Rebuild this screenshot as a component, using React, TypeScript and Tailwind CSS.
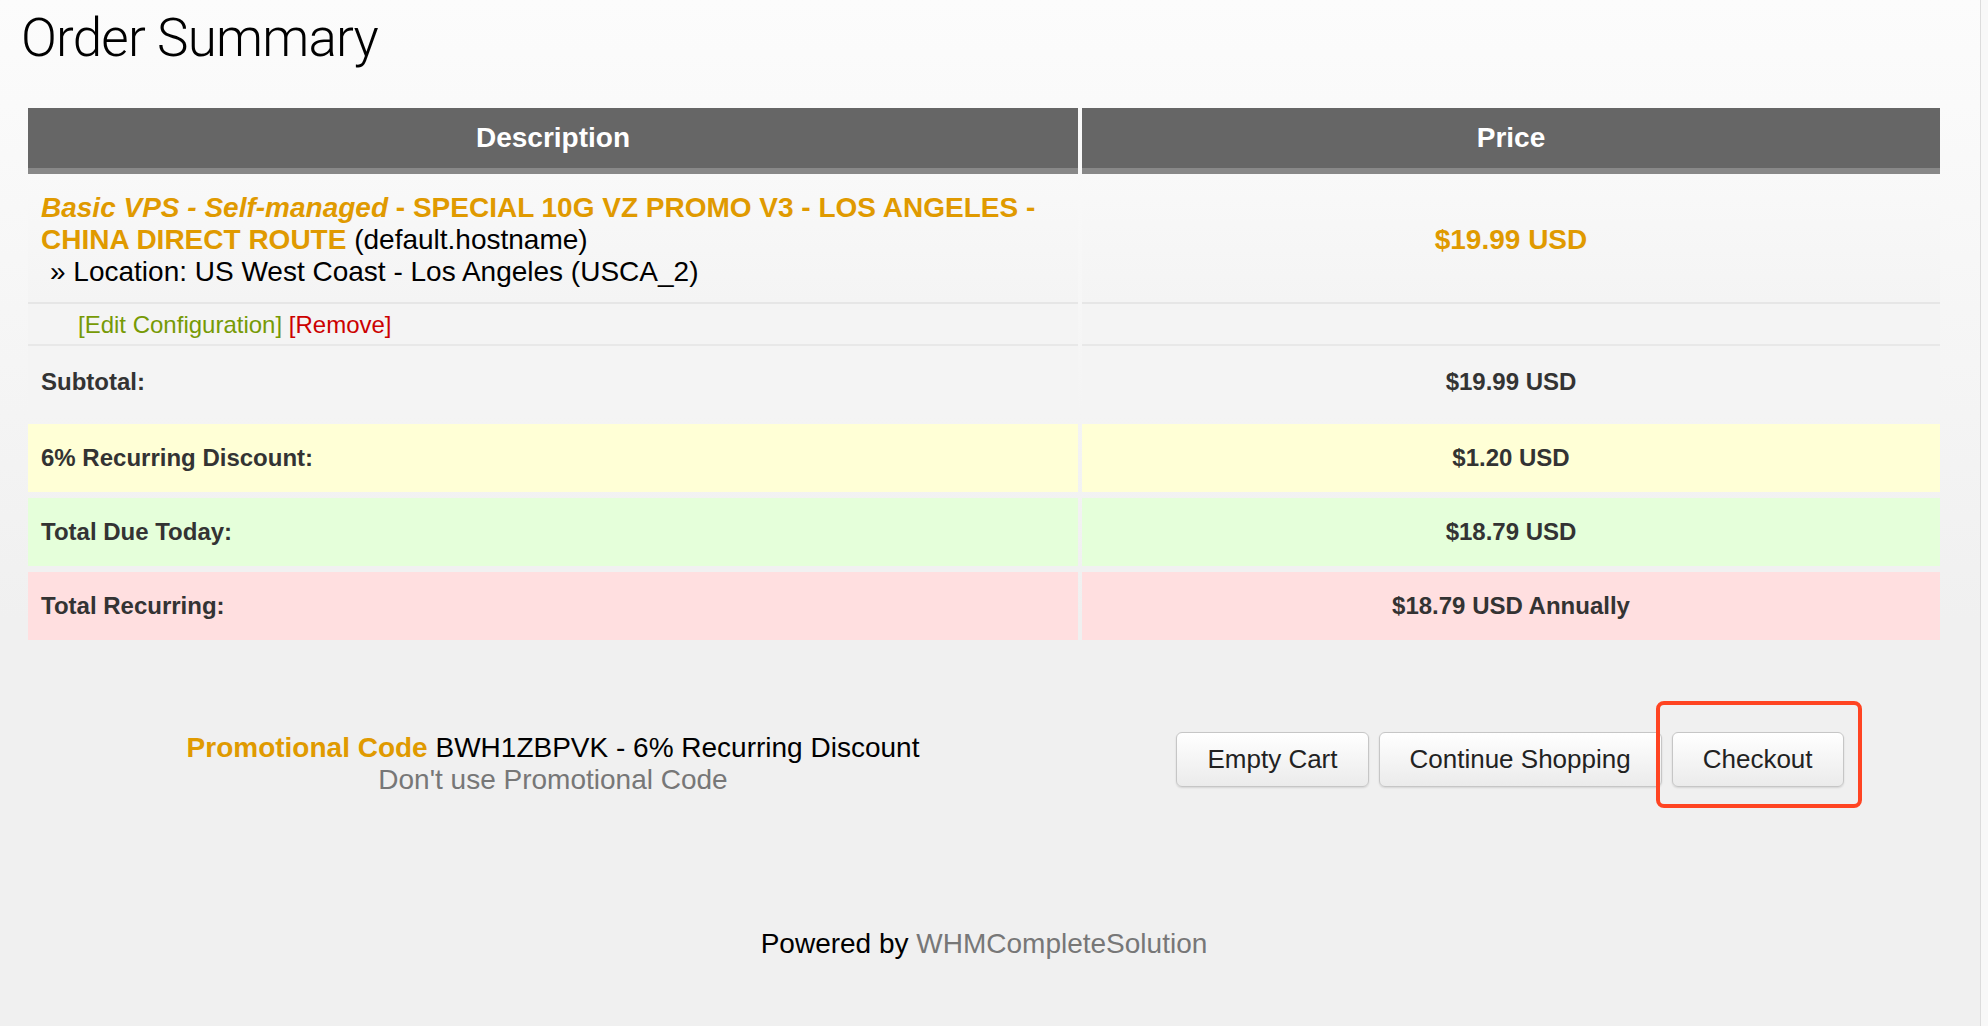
const orange = "text-[#e09a00]";

const SummaryRow = ({ label, value, bg, h = "h-[68px]" }: { label: string; value: string; bg: string; h?: string }) => (
  <div className={`grid grid-cols-[1050px_858px] gap-x-[4px] ${h}`}>
    <div className={`${bg} flex items-center pl-[13px] text-[24px] font-bold text-[#333]`}>{label}</div>
    <div className={`${bg} flex items-center justify-center text-[24px] font-bold text-[#333]`}>{value}</div>
  </div>
);

const Button = ({ children }: { children: React.ReactNode }) => (
  <button className="h-[55px] px-[30px] rounded-[6px] border border-[#c6c6c6] bg-gradient-to-b from-white to-[#ebebeb] text-[26px] text-[#222] shadow-[0_1px_2px_rgba(0,0,0,0.12)]">
    {children}
  </button>
);

export default function App() {
  return (
    <div className="min-h-screen flex bg-[linear-gradient(#fcfcfc,#f0f0f0_620px)] font-['Liberation_Sans',Arial,sans-serif]">
      <div className="w-[1980px] pb-[60px]">
        <h1 className="pl-[21px] pt-[8px] h-[68px] leading-[60px] text-[53px] font-light tracking-[-0.8px] text-black font-['Roboto',sans-serif]">
          Order Summary
        </h1>

        <div className="ml-[28px] mt-[40px] w-[1912px]">
          {/* header */}
          <div className="grid grid-cols-[1050px_858px] gap-x-[4px]">
            <div className="h-[66px] bg-[#666] border-b-[6px] border-[#888] flex items-center justify-center text-white text-[28px] font-bold">
              Description
            </div>
            <div className="h-[66px] bg-[#666] border-b-[6px] border-[#888] flex items-center justify-center text-white text-[28px] font-bold">
              Price
            </div>
          </div>

          {/* product */}
          <div className="grid grid-cols-[1050px_858px] gap-x-[4px]">
            <div className="h-[130px] bg-gradient-to-b from-[#f9f9f9] to-[#f4f4f4] border-b-2 border-[#e6e6e6] pl-[13px] pt-[18px] text-[28px] leading-[32px] text-black">
              <p>
                <span className={`${orange} font-bold italic`}>Basic VPS - Self-managed</span>
                <span className={`${orange} font-bold`}> - SPECIAL 10G VZ PROMO V3 - LOS ANGELES - CHINA DIRECT ROUTE</span>{" "}
                (default.hostname)
              </p>
              <p className="pl-[9px]">» Location: US West Coast - Los Angeles (USCA_2)</p>
            </div>
            <div className={`h-[130px] pt-[4px] bg-gradient-to-b from-[#f9f9f9] to-[#f4f4f4] border-b-2 border-[#e6e6e6] flex items-center justify-center text-[28px] font-bold ${orange}`}>
              $19.99 USD
            </div>
          </div>

          <div className="grid grid-cols-[1050px_858px] gap-x-[4px]">
            <div className="h-[42px] bg-[#f4f4f4] border-b-2 border-[#e8e8e8] pl-[50px] pt-[1px] text-[24px] leading-[40px]">
              <span className="text-[#779a05]">[Edit Configuration]</span> <span className="text-[#cc0000]">[Remove]</span>
            </div>
            <div className="h-[42px] bg-[#f4f4f4] border-b-2 border-[#e8e8e8]" />
          </div>

          <div className="flex flex-col gap-[6px]">
            <SummaryRow label="Subtotal:" value="$19.99 USD" bg="bg-[#f4f4f4]" h="h-[72px]" />
            <SummaryRow label="6% Recurring Discount:" value="$1.20 USD" bg="bg-[#ffffd6]" />
            <SummaryRow label="Total Due Today:" value="$18.79 USD" bg="bg-[#e5ffda]" />
            <SummaryRow label="Total Recurring:" value="$18.79 USD Annually" bg="bg-[#ffdfe0]" />
          </div>

          {/* promo + actions */}
          <div className="grid grid-cols-[1050px_858px] gap-x-[4px] mt-[92px] items-start">
            <div className="text-center text-[28px] leading-[32px]">
              <p>
                <span className={`${orange} font-bold`}>Promotional Code</span> BWH1ZBPVK - 6% Recurring Discount
              </p>
              <p className="text-[#777]">Don't use Promotional Code</p>
            </div>
            <div className="flex justify-center gap-[10px] pr-[2px]">
              <Button>Empty Cart</Button>
              <Button>Continue Shopping</Button>
              <div className="relative">
                <Button>Checkout</Button>
                <div className="absolute left-[-16px] right-[-18px] top-[-31px] bottom-[-21px] border-4 border-[#ff4422] rounded-[8px] pointer-events-none" />
              </div>
            </div>
          </div>

          <div className="mt-[132px] text-center text-[28px] leading-[32px] text-black">
            Powered by <span className="text-[#777]">WHMCompleteSolution</span>
          </div>
        </div>
      </div>
      <div className="w-[8px] border-l border-[#dcdcdc] bg-[#f8f8f8]" />
    </div>
  );
}
